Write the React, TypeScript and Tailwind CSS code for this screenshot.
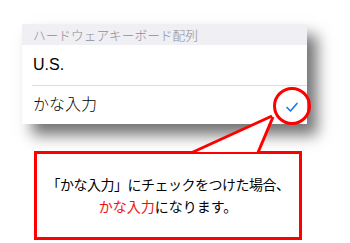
import React from "react";

const jp = { fontFamily: '"Noto Sans CJK JP", "Noto Sans", sans-serif' };
const row = { fontFamily: '"Liberation Sans", "Noto Sans CJK JP", sans-serif' };

export default function App() {
  return (
    <div className="relative h-[243px] w-[350px] overflow-hidden bg-white" style={jp}>
      {/* settings card */}
      <div className="ml-[22px] mt-[24px] w-[285px] bg-white shadow-[10px_11px_14px_rgba(0,0,0,0.55)]">
        <div className="flex h-[21px] items-center bg-[#efeff4] pl-[11px] text-[12.7px] font-light text-[#8e8e93]">
          ハードウェアキーボード配列
        </div>
        <div className="pl-[10px]" style={row}>
          <div className="flex h-[40px] items-center pl-px text-[16px] text-black">U.S.</div>
          <div className="flex h-[39px] items-center border-t border-[#dcdce0] pl-px text-[16px] font-light text-black">
            かな入力
          </div>
        </div>
      </div>

      {/* callout */}
      <div className="ml-[34px] mt-[27px] flex h-[89px] w-[268px] flex-col items-center justify-center border-[3px] border-[#ff0000] bg-white pb-[2px] text-[14px] leading-[22px] text-black">
        <div className="tracking-[-0.5px]">「かな入力」にチェックをつけた場合、</div>
        <div>
          <span className="text-[#ee1111]">かな入力</span>になります。
        </div>
      </div>

      {/* annotation overlay */}
      <svg className="pointer-events-none absolute left-0 top-0" width="350" height="243" viewBox="0 0 350 243">
        <polygon points="193,152 272,116 258,152" fill="white" />
        <polyline points="192,152.5 272,116" fill="none" stroke="#ff0000" strokeWidth="3" />
        <polyline points="273,117 258,152.5" fill="none" stroke="#ff0000" strokeWidth="3" />
        <circle cx="292" cy="106" r="17.5" fill="none" stroke="#ff0000" strokeWidth="3" />
        <polyline
          points="287,107.5 290.5,111 297,103.5"
          fill="none"
          stroke="#1a7cf5"
          strokeWidth="1.7"
          strokeLinecap="round"
          strokeLinejoin="round"
        />
      </svg>
    </div>
  );
}
